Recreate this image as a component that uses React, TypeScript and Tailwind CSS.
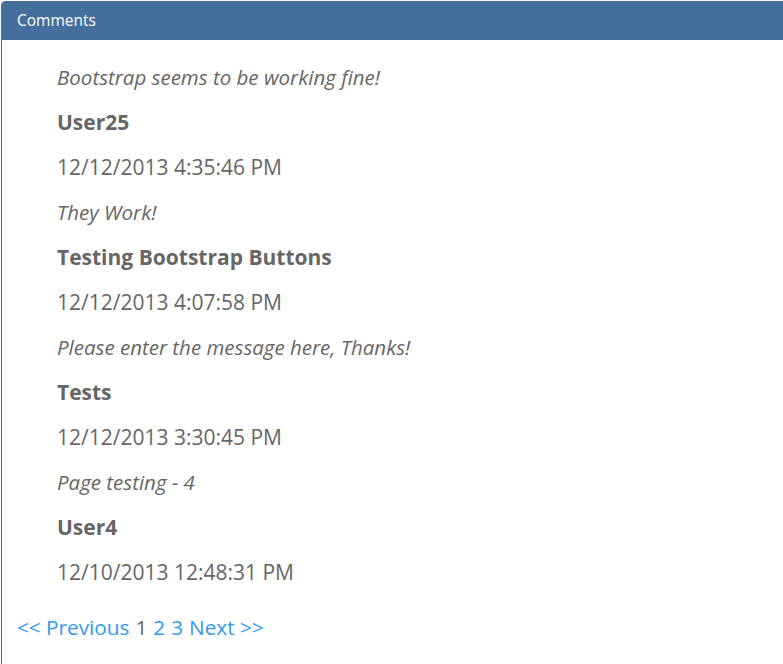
import React from "react";

const rows: { text: string; kind: "i" | "b" | "n" }[] = [
  { text: "Bootstrap seems to be working fine!", kind: "i" },
  { text: "User25", kind: "b" },
  { text: "12/12/2013 4:35:46 PM", kind: "n" },
  { text: "They Work!", kind: "i" },
  { text: "Testing Bootstrap Buttons", kind: "b" },
  { text: "12/12/2013 4:07:58 PM", kind: "n" },
  { text: "Please enter the message here, Thanks!", kind: "i" },
  { text: "Tests", kind: "b" },
  { text: "12/12/2013 3:30:45 PM", kind: "n" },
  { text: "Page testing - 4", kind: "i" },
  { text: "User4", kind: "b" },
  { text: "12/10/2013 12:48:31 PM", kind: "n" },
];

export default function App() {
  return (
    <div className="w-[783px] h-[664px] overflow-hidden bg-white" style={{ fontFamily: '"Open Sans", sans-serif' }}>
      <div className="ml-[1px] mt-[1px] w-[820px] h-[700px] border border-[#446e9b] rounded-[4px] overflow-hidden">
        <div className="h-[38px] bg-[#446e9b] px-[15px] flex items-center text-white text-[15.5px]">Comments</div>
        <div className="p-[15px] text-[#666666] text-[21px]">
          <ul className="pl-[40px]">
            {rows.map((r, i) => (
              <li
                key={i}
                className={
                  "h-[45px] flex items-center " +
                  (r.kind === "i" ? "italic text-[20.5px]" : r.kind === "b" ? "font-bold" : "")
                }
              >
                {r.text}
              </li>
            ))}
          </ul>
          <div className="mt-[19px] h-[28px] flex items-center text-[#3399f3] text-[20.75px]">
            <span>&lt;&lt; Previous</span>
            <span className="ml-[6px] text-[#666666]">1</span>
            <span className="ml-[6px]">2</span>
            <span className="ml-[6px]">3</span>
            <span className="ml-[6px]">Next &gt;&gt;</span>
          </div>
        </div>
      </div>
    </div>
  );
}
